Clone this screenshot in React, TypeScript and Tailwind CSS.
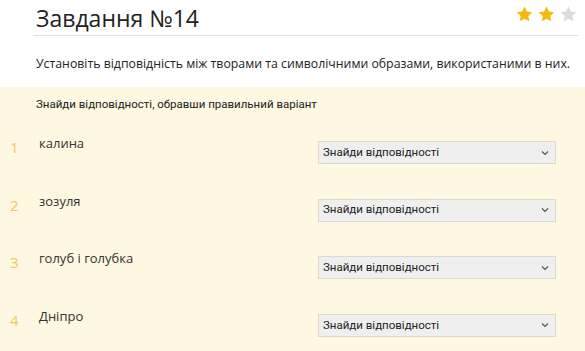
import React from "react";

const Star = ({ filled }: { filled: boolean }) => (
  <svg width="17" height="16" viewBox="0 0 24 23" className="block">
    <path
      d="M12 0.8l3.4 7.1 7.8 1-5.7 5.4 1.4 7.7L12 18.3l-6.9 3.7 1.4-7.7L0.8 8.9l7.8-1z"
      fill={filled ? "#f6b90d" : "#dcdcdc"}
    />
  </svg>
);

const rows = ["калина", "зозуля", "голуб і голубка", "Дніпро"];

export default function App() {
  return (
    <div className="w-[585px] h-[351px] bg-white overflow-hidden flex flex-col" style={{ fontFamily: '"Open Sans", sans-serif' }}>
      <div className="flex items-end pl-[33px] pr-[7px] pt-[4px]">
        <div className="flex-1 flex items-end justify-between border-b border-[#dedede] pb-[3px]">
          <div className="text-[23px] leading-[28px] text-[#222] pl-[3px]">Завдання №14</div>
          <div className="flex gap-[5px] mb-[10px] mr-[1px]">
            <Star filled />
            <Star filled />
            <Star filled={false} />
          </div>
        </div>
      </div>
      <div className="pl-[36px] mt-[19px] text-[12.3px] leading-[18px] text-[#222]">
        Установіть відповідність між творами та символічними образами, використаними в них.
      </div>
      <div className="mt-[14px] flex-1 bg-[#fef7e1] pt-[9px]">
        <div className="pl-[36px] text-[11.5px] leading-[16px] text-[#222]" style={{ fontFamily: 'Roboto, sans-serif' }}>
          Знайди відповідності, обравши правильний варіант
        </div>
        <div className="mt-[21px] flex flex-col">
          {rows.map((r, i) => (
            <div key={i} className="flex items-start h-[57.6px]">
              <div className="w-[39px] pl-[10px] mt-[4px] text-[15px] leading-[20px] text-[#f0c85a]">{i + 1}</div>
              <div className="flex-1 mt-[1px] text-[13px] leading-[18px] text-[#333]">{r}</div>
              <div
                className="mt-[8px] mr-[29px] w-[238px] h-[23px] bg-[#efefef] border border-[#ddd9cc] flex items-center justify-between pl-[4px] pr-[6px] text-[11.5px] text-[#222]"
                style={{ fontFamily: 'Roboto, sans-serif' }}
              >
                <span>Знайди відповідності</span>
                <svg width="8" height="6" viewBox="0 0 8 6">
                  <path d="M1 1.5l3 3 3-3" stroke="#555" strokeWidth="1.2" fill="none" />
                </svg>
              </div>
            </div>
          ))}
        </div>
      </div>
    </div>
  );
}
